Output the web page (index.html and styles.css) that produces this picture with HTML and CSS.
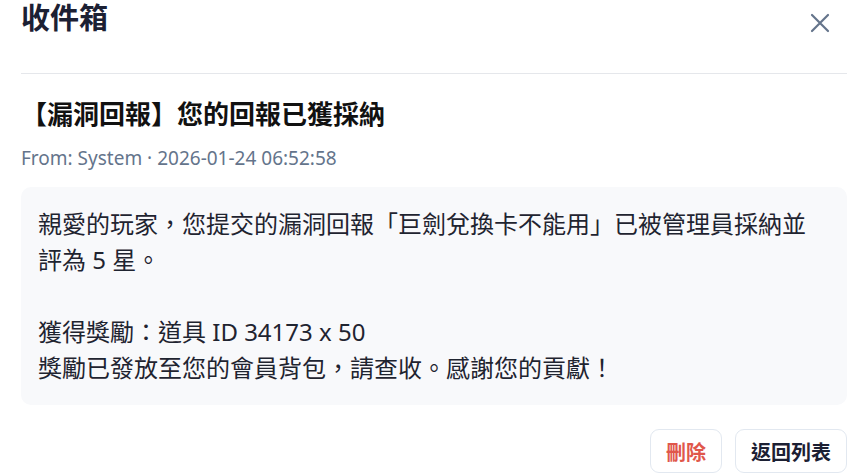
FILE: index.html
```html
<!DOCTYPE html>
<html lang="zh-Hant">
<head>
    <meta charset="UTF-8">
    <meta name="viewport" content="width=device-width, initial-scale=1.0">
    <title>收件箱</title>
    <link rel="stylesheet" href="styles.css">
</head>
<body>

<div class="mail-modal">
    <div class="modal-header">
        <h2 class="modal-title">收件箱</h2>
        <button class="close-btn" aria-label="關閉">
            <svg width="20" height="20" viewBox="0 0 20 20">
                <path d="M2 2 L18 18 M18 2 L2 18" stroke="currentColor" stroke-width="2.2" stroke-linecap="round" fill="none"/>
            </svg>
        </button>
    </div>

    <div class="mail-detail">
        <h3 class="mail-subject">【漏洞回報】您的回報已獲採納</h3>
        <div class="mail-meta">From: System · 2026-01-24 06:52:58</div>
        <div class="mail-body">
            <p>親愛的玩家，您提交的漏洞回報「巨劍兌換卡不能用」已被管理員採納並評為 5 星。</p>
            <p class="gap">獲得獎勵：道具 ID 34173 x 50<br>獎勵已發放至您的會員背包，請查收。感謝您的貢獻！</p>
        </div>
    </div>

    <div class="mail-actions">
        <button class="btn btn-danger">刪除</button>
        <button class="btn">返回列表</button>
    </div>
</div>

</body>
</html>
```

FILE: styles.css
```css
body {
    margin: 0;
    background: #fff;
    font-family: "Noto Sans", "Noto Sans CJK TC", sans-serif;
    color: #1f2430;
}

.mail-modal {
    padding: 0 14px 0 21px;
}

.modal-header {
    display: flex;
    justify-content: space-between;
    align-items: flex-start;
    height: 73px;
    border-bottom: 1px solid #e5e7eb;
}

.modal-title {
    margin: 0;
    font-size: 29px;
    line-height: 35px;
    font-weight: 700;
    color: #1c2033;
}

.close-btn {
    margin: 13px 17px 0 0;
    padding: 0;
    border: none;
    background: none;
    color: #64748b;
    width: 20px;
    height: 20px;
    cursor: pointer;
}

.close-btn svg {
    display: block;
}

.mail-subject {
    margin: 22px 0 0;
    font-size: 26px;
    line-height: 36px;
    font-weight: 700;
    color: #111;
}

.mail-meta {
    margin-top: 13px;
    font-size: 19px;
    line-height: 26px;
    color: #64748b;
}

.mail-body {
    margin-top: 16px;
    padding: 19px 35px 19px 17px;
    background: #f8f9fb;
    border-radius: 10px;
    font-size: 24px;
    line-height: 36px;
    color: #1f2430;
}

.mail-body p {
    margin: 0;
}

.mail-body .gap {
    margin-top: 36px;
}

.mail-actions {
    display: flex;
    justify-content: flex-end;
    gap: 13px;
    margin-top: 24px;
}

.btn {
    height: 44px;
    padding: 0 15px;
    border: 1px solid #e2e8f0;
    border-radius: 9px;
    background: #fff;
    font-family: inherit;
    font-size: 20px;
    font-weight: 700;
    color: #1c2033;
    cursor: pointer;
}

.btn-danger {
    color: #e0574b;
}
```
